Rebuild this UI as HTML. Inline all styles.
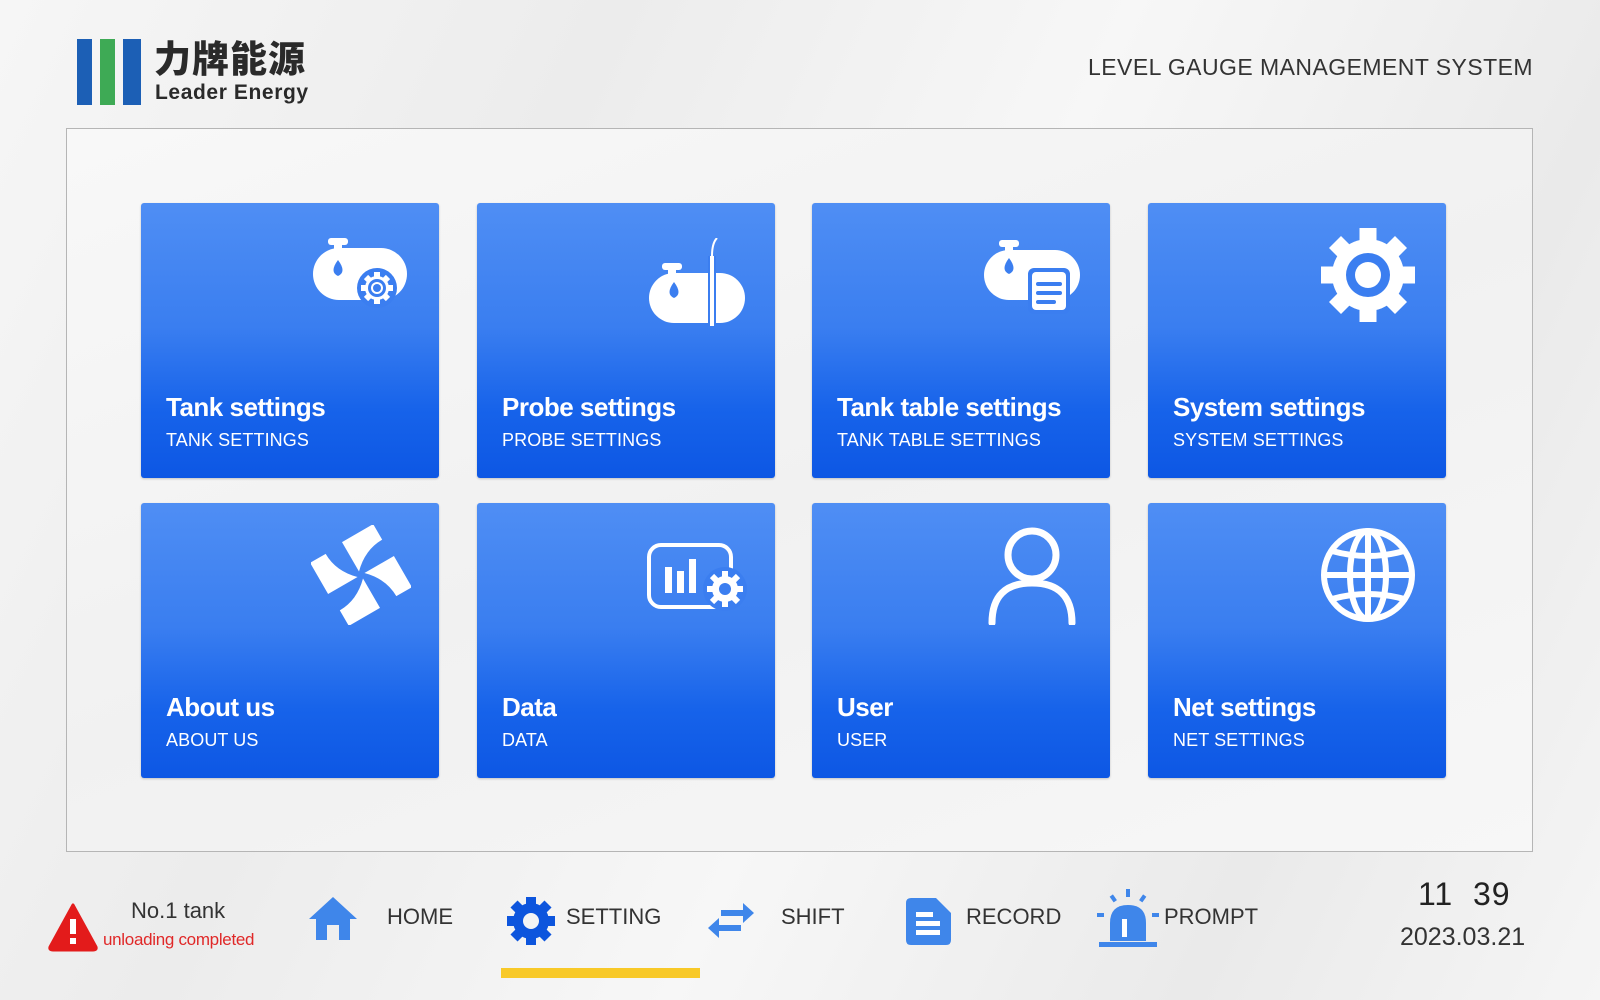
<!DOCTYPE html>
<html><head><meta charset="utf-8"><style>
*{margin:0;padding:0;box-sizing:border-box}
body{width:1600px;height:1000px;overflow:hidden;background:linear-gradient(115deg,#f6f6f6 0%,#ececec 30%,#f7f7f7 55%,#eaeaea 80%,#f5f5f5 100%);font-family:"Liberation Sans","Noto Sans CJK SC",sans-serif;position:relative}
.abs{position:absolute}
.panel{left:66px;top:128px;width:1467px;height:731px;border:1.5px solid #b5b5b5;background:linear-gradient(160deg,#f8f8f8,#f1f1f1 50%,#f7f7f7)}
.card{position:absolute;width:298px;height:275px;border-radius:3px;background:linear-gradient(180deg,#4f8ef4 0%,#3a7ef0 45%,#1763ea 75%,#0d57e4 100%);color:#fff;box-shadow:0 1px 2px rgba(0,0,0,.2)}
.card .t{position:absolute;left:25px;top:189px;font-size:26px;font-weight:bold;letter-spacing:-.5px}
.card .s{position:absolute;left:25px;top:227px;font-size:18px;letter-spacing:.1px}
.card svg{position:absolute;left:170px;top:35px}
.nav{position:absolute;top:904px;font-size:22px;color:#333}
</style></head><body>
<!-- logo -->
<div class="abs" style="left:77px;top:39px;width:15px;height:66px;background:#1c5fb5"></div>
<div class="abs" style="left:100px;top:39px;width:15px;height:66px;background:#3eaa55"></div>
<div class="abs" style="left:123px;top:39px;width:18px;height:66px;background:#1c5fb5"></div>
<div class="abs" style="left:154px;top:34px;font-size:37px;font-weight:900;color:#2a2a2a;font-family:'Noto Sans CJK SC',sans-serif;letter-spacing:1px;line-height:44px">力牌能源</div>
<div class="abs" style="left:155px;top:81px;font-size:21px;font-weight:bold;color:#2a2a2a;letter-spacing:.6px">Leader Energy</div>
<div class="abs" style="left:1088px;top:54px;font-size:23px;color:#333;letter-spacing:.45px">LEVEL GAUGE MANAGEMENT SYSTEM</div>

<div class="abs panel" style="height:724px"></div>

<!-- row 1 -->
<div class="card" style="left:141px;top:203px">
<svg width="100" height="80" viewBox="0 0 100 80"><rect x="17" y="0" width="20" height="7" rx="3" fill="#fff"/><rect x="23" y="5" width="8" height="8" fill="#fff"/><rect x="2" y="10" width="94" height="52" rx="26" fill="#fff"/><path d="M27 20 q-9 12 0 16 q9 -4 0 -16z" fill="#3b7ef0" transform="translate(0,2)"/><circle cx="66" cy="50" r="20" fill="#3b7ef0"/><g fill="#fff"><circle cx="66" cy="50" r="12"/><g stroke="#fff" stroke-width="6"><line x1="66" y1="34" x2="66" y2="66"/><line x1="50" y1="50" x2="82" y2="50"/><line x1="55" y1="39" x2="77" y2="61"/><line x1="55" y1="61" x2="77" y2="39"/></g></g><circle cx="66" cy="50" r="9" fill="#3b7ef0"/><circle cx="66" cy="50" r="6" fill="#fff"/><circle cx="66" cy="50" r="4" fill="#3b7ef0"/></svg>
<div class="t">Tank settings</div><div class="s">TANK SETTINGS</div></div>
<div class="card" style="left:477px;top:203px">
<svg width="100" height="90" viewBox="0 0 100 90"><rect x="15" y="25" width="20" height="7" rx="3" fill="#fff"/><rect x="21" y="30" width="8" height="8" fill="#fff"/><rect x="2" y="35" width="96" height="50" rx="25" fill="#fff"/><path d="M27 44 q-9 12 0 16 q9 -4 0 -16z" fill="#3b7ef0"/><path d="M70 0 q-5 5 -5 18" stroke="#fff" stroke-width="2" fill="none"/><rect x="61" y="18" width="8" height="70" fill="#3b7ef0"/><rect x="63" y="18" width="4" height="70" fill="#fff"/></svg>
<div class="t">Probe settings</div><div class="s">PROBE SETTINGS</div></div>
<div class="card" style="left:812px;top:203px">
<svg width="100" height="80" viewBox="0 0 100 80"><rect x="17" y="2" width="20" height="7" rx="3" fill="#fff"/><rect x="23" y="7" width="8" height="8" fill="#fff"/><rect x="2" y="12" width="96" height="50" rx="25" fill="#fff"/><path d="M27 20 q-9 12 0 16 q9 -4 0 -16z" fill="#3b7ef0"/><rect x="46" y="30" width="42" height="46" rx="6" fill="#3b7ef0"/><rect x="50" y="34" width="34" height="38" rx="4" fill="#fff"/><g stroke="#3b7ef0" stroke-width="4" stroke-linecap="round"><line x1="56" y1="46" x2="78" y2="46"/><line x1="56" y1="55" x2="78" y2="55"/><line x1="56" y1="64" x2="72" y2="64"/></g></svg>
<div class="t">Tank table settings</div><div class="s">TANK TABLE SETTINGS</div></div>
<div class="card" style="left:1148px;top:203px">
<svg width="100" height="100" viewBox="0 0 100 100" style="top:22px"><g stroke="#fff" stroke-width="17"><line x1="50" y1="3" x2="50" y2="97"/><line x1="3" y1="50" x2="97" y2="50"/><line x1="17" y1="17" x2="83" y2="83"/><line x1="17" y1="83" x2="83" y2="17"/></g><circle cx="50" cy="50" r="36" fill="#fff"/><circle cx="50" cy="50" r="22" fill="#3b7ef0"/><circle cx="50" cy="50" r="13" fill="#fff"/></svg>
<div class="t">System settings</div><div class="s">SYSTEM SETTINGS</div></div>

<!-- row 2 -->
<div class="card" style="left:141px;top:503px">
<svg width="100" height="100" viewBox="0 0 100 100" style="top:22px"><g fill="#fff" transform="rotate(-30 50 50)"><path d="M50 46 L50 12 L86 12 L86 30 Q66 30 50 46z"/><path d="M54 50 L88 50 L88 86 L70 86 Q70 66 54 50z"/><path d="M50 54 L50 88 L14 88 L14 70 Q34 70 50 54z"/><path d="M46 50 L12 50 L12 14 L30 14 Q30 34 46 50z"/></g></svg>
<div class="t">About us</div><div class="s">ABOUT US</div></div>
<div class="card" style="left:477px;top:503px">
<svg width="100" height="80" viewBox="0 0 100 80" style="top:40px"><rect x="2" y="2" width="82" height="62" rx="12" fill="none" stroke="#fff" stroke-width="4"/><g fill="#fff"><rect x="18" y="24" width="7" height="26"/><rect x="30" y="28" width="7" height="22"/><rect x="42" y="16" width="7" height="34"/></g><circle cx="78" cy="46" r="22" fill="#3b7ef0"/><g stroke="#fff" stroke-width="6"><line x1="78" y1="28" x2="78" y2="64"/><line x1="60" y1="46" x2="96" y2="46"/><line x1="65" y1="33" x2="91" y2="59"/><line x1="65" y1="59" x2="91" y2="33"/></g><circle cx="78" cy="46" r="13" fill="#fff"/><circle cx="78" cy="46" r="6" fill="#3b7ef0"/></svg>
<div class="t">Data</div><div class="s">DATA</div></div>
<div class="card" style="left:812px;top:503px">
<svg width="100" height="100" viewBox="0 0 100 100" style="top:22px"><circle cx="50" cy="30" r="24" fill="none" stroke="#fff" stroke-width="7"/><path d="M10 98 Q10 58 50 58 Q90 58 90 98" fill="none" stroke="#fff" stroke-width="7" stroke-linecap="round"/></svg>
<div class="t">User</div><div class="s">USER</div></div>
<div class="card" style="left:1148px;top:503px">
<svg width="100" height="100" viewBox="0 0 100 100" style="top:22px"><g fill="none" stroke="#fff" stroke-width="6"><circle cx="50" cy="50" r="44"/><ellipse cx="50" cy="50" rx="18" ry="44"/><line x1="50" y1="6" x2="50" y2="94"/><line x1="6" y1="50" x2="94" y2="50"/><path d="M14 26 Q50 36 86 26"/><path d="M14 74 Q50 64 86 74"/></g></svg>
<div class="t">Net settings</div><div class="s">NET SETTINGS</div></div>

<!-- bottom bar -->
<svg class="abs" style="left:47px;top:902px" width="52" height="50" viewBox="0 0 52 50"><path d="M26 3 L49 45 Q50 48 46 48 L6 48 Q2 48 3 45z" fill="#e31b1b" stroke="#e31b1b" stroke-width="3" stroke-linejoin="round"/><rect x="23" y="17" width="6" height="15" fill="#fff"/><rect x="23" y="36" width="6" height="6" fill="#fff"/></svg>
<div class="abs" style="left:131px;top:898px;font-size:22px;color:#333">No.1 tank</div>
<div class="abs" style="left:103px;top:930px;font-size:17px;color:#e02828;letter-spacing:-.3px">unloading completed</div>

<svg class="abs" style="left:308px;top:895px" width="50" height="46" viewBox="0 0 50 46"><path d="M25 2 L49 24 L42 24 L42 45 L31 45 L31 30 L19 30 L19 45 L8 45 L8 24 L1 24z" fill="#3f86ea"/></svg>
<div class="nav" style="left:387px">HOME</div>

<svg class="abs" style="left:506px;top:896px" width="50" height="50" viewBox="0 0 100 100"><g stroke="#0d55dd" stroke-width="20"><line x1="50" y1="2" x2="50" y2="98"/><line x1="2" y1="50" x2="98" y2="50"/><line x1="16" y1="16" x2="84" y2="84"/><line x1="16" y1="84" x2="84" y2="16"/></g><circle cx="50" cy="50" r="36" fill="#0d55dd"/><circle cx="50" cy="50" r="16" fill="#f4f4f4"/></svg>
<div class="nav" style="left:566px">SETTING</div>
<div class="abs" style="left:501px;top:968px;width:199px;height:10px;background:#f8c928"></div>

<svg class="abs" style="left:707px;top:902px" width="48" height="38" viewBox="0 0 48 38"><g fill="#3f86ea"><rect x="14" y="8" width="24" height="6"/><path d="M36 1 L47 11 L36 21z"/><rect x="10" y="23" width="24" height="6"/><path d="M12 16 L1 26 L12 36z"/></g></svg>
<div class="nav" style="left:781px">SHIFT</div>

<svg class="abs" style="left:906px;top:898px" width="46" height="48" viewBox="0 0 46 48"><path d="M5 0 L30 0 L45 15 L45 42 Q45 47 40 47 L5 47 Q0 47 0 42 L0 5 Q0 0 5 0z" fill="#3f86ea"/><g fill="#fff"><rect x="10" y="14" width="17" height="5"/><rect x="10" y="23" width="24" height="5"/><rect x="10" y="32" width="24" height="5"/></g></svg>
<div class="nav" style="left:966px">RECORD</div>

<svg class="abs" style="left:1097px;top:889px" width="62" height="60" viewBox="0 0 62 60"><g fill="#3f86ea"><rect x="29" y="0" width="4" height="8"/><rect x="14" y="6" width="4" height="7" transform="rotate(-35 16 9)"/><rect x="44" y="6" width="4" height="7" transform="rotate(35 46 9)"/><rect x="0" y="24" width="7" height="4"/><rect x="55" y="24" width="7" height="4"/><path d="M13 52 L13 34 Q13 16 31 16 Q49 16 49 34 L49 52z"/><rect x="2" y="53" width="58" height="5"/></g><rect x="25" y="30" width="5" height="18" fill="#fff"/></svg>
<div class="nav" style="left:1164px">PROMPT</div>

<div class="abs" style="left:1418px;top:876px;font-size:32px;color:#222;letter-spacing:1px">11&nbsp;&nbsp;39</div>
<div class="abs" style="left:1400px;top:923px;font-size:25px;color:#333">2023.03.21</div>
</body></html>
